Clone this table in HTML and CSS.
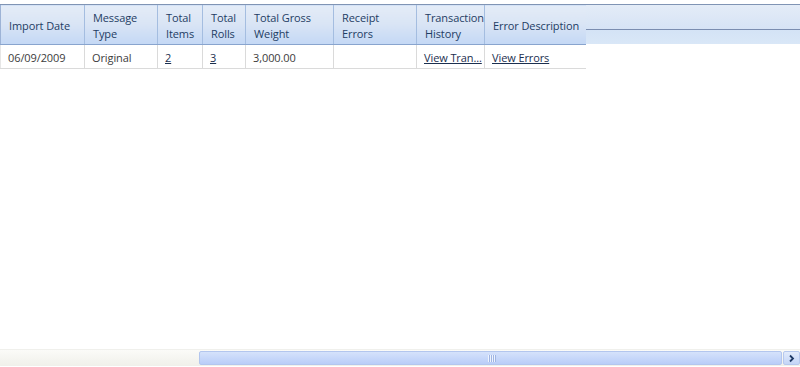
FILE: index.html
```html
<!DOCTYPE html>
<html>
<head>
<meta charset="utf-8">
<link rel="stylesheet" href="styles.css">
</head>
<body>
<div class="page">
  <div class="grid-area">
    <div class="grid">
      <table class="tbl">
        <colgroup>
          <col class="c1"><col class="c2"><col class="c3"><col class="c4">
          <col class="c5"><col class="c6"><col class="c7"><col class="c8">
        </colgroup>
        <thead>
          <tr>
            <th>Import Date</th>
            <th>Message<br>Type</th>
            <th>Total<br>Items</th>
            <th>Total<br>Rolls</th>
            <th>Total Gross<br>Weight</th>
            <th>Receipt<br>Errors</th>
            <th>Transaction<br>History</th>
            <th>Error Description</th>
          </tr>
        </thead>
        <tbody>
          <tr>
            <td>06/09/2009</td>
            <td>Original</td>
            <td><a href="#">2</a></td>
            <td><a href="#">3</a></td>
            <td>3,000.00</td>
            <td></td>
            <td><a href="#">View Tran...</a></td>
            <td><a href="#">View Errors</a></td>
          </tr>
        </tbody>
      </table>
      <div class="filler">
        <div class="filler-top"></div>
        <div class="filler-bottom"></div>
      </div>
    </div>
  </div>
  <div class="hscroll">
    <div class="track"></div>
    <div class="thumb"><span class="grip"></span></div>
    <div class="btn">
      <svg width="9" height="9" viewBox="0 0 9 9"><path d="M3 1.5 L6 4.5 L3 7.5" fill="none" stroke="#1f3a66" stroke-width="1.8"/></svg>
    </div>
  </div>
</div>
</body>
</html>
```
FILE: styles.css
```css
html, body {
  margin: 0;
  padding: 0;
  background: #fff;
}
.page {
  width: 800px;
  height: 367px;
  display: flex;
  flex-direction: column;
  font-family: "Open Sans", "Noto Sans", sans-serif;
  font-size: 11px;
}
.grid-area {
  flex: 1;
  padding-top: 4px;
  overflow: hidden;
}
.grid {
  display: flex;
  align-items: flex-start;
}
.tbl {
  border-collapse: collapse;
  table-layout: fixed;
  width: 585px;
  flex: none;
}
.c1 { width: 84px; }
.c2 { width: 73px; }
.c3 { width: 45px; }
.c4 { width: 43px; }
.c5 { width: 88px; }
.c6 { width: 83px; }
.c7 { width: 68px; }
.c8 { width: 101px; }
.tbl th {
  height: 37px;
  padding: 2px 3px 0 8px;
  text-align: left;
  font-weight: normal;
  color: #1e3d64;
  line-height: 16px;
  letter-spacing: -0.1px;
  background: linear-gradient(#e4ecf7 0%, #dae5f5 45%, #c4d8f5 100%);
  border-top: 1px solid #8094b4;
  border-bottom: 1px solid #88a4ce;
  border-left: 1px solid #a4bde0;
  white-space: nowrap;
  overflow: hidden;
}
.tbl th:first-child {
  border-left: 1px solid #9db3d6;
}
.tbl td {
  height: 22px;
  padding: 1px 3px 0 7px;
  color: #3c3c3c;
  border-bottom: 1px solid #dadada;
  border-left: 1px solid #dadada;
  white-space: nowrap;
  overflow: hidden;
  letter-spacing: -0.1px;
}
.tbl td:first-child {
  border-left: 1px solid #e6e6e6;
}
.tbl td a {
  color: #1b2f4f;
  text-decoration: underline;
}
.filler {
  flex: 1;
  display: flex;
  flex-direction: column;
  border-top: 1px solid #8094b4;
}
.filler-top {
  height: 24px;
  background: linear-gradient(#e4ecf7 0%, #d6e3f5 100%);
  border-bottom: 1px solid #7a8db0;
}
.filler-bottom {
  height: 14px;
  background: linear-gradient(#d4e3f6, #d9e7f7);
}
.hscroll {
  height: 16px;
  margin-bottom: 1px;
  display: flex;
  align-items: stretch;
  background: linear-gradient(#fbfbf8, #f0f0ea);
  border-top: 1px solid #f0f0ec;
}
.track {
  width: 199px;
  flex: none;
}
.thumb {
  flex: 1;
  margin: 1px 0;
  background: linear-gradient(#d5e2fb, #b9cdf8);
  border: 1px solid #b3c6ee;
  border-radius: 2px;
  display: flex;
  align-items: center;
  justify-content: center;
  padding-left: 2px;
}
.grip {
  width: 8px;
  height: 7px;
  background: repeating-linear-gradient(90deg, #eef3fd 0 1px, #9fb5e3 1px 2px);
}
.btn {
  width: 15px;
  flex: none;
  margin: 1px 0 1px 1px;
  background: linear-gradient(#e2ebfc, #c4d5f7);
  border: 1px solid #b6c8ee;
  border-radius: 2px;
  display: flex;
  align-items: center;
  justify-content: center;
}
```
